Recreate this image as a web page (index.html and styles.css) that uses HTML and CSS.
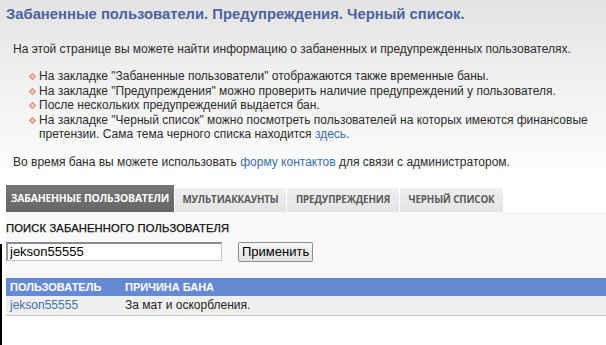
FILE: index.html
```html
<!DOCTYPE html>
<html lang="ru">
<head>
<meta charset="utf-8">
<link rel="stylesheet" href="styles.css">
</head>
<body>
<div class="page">
  <h1 class="title">Забаненные пользователи. Предупреждения. Черный список.</h1>
  <p class="intro">На этой странице вы можете найти информацию о забаненных и предупрежденных пользователях.</p>
  <ul class="notes">
    <li>На закладке "Забаненные пользователи" отображаются также временные баны.</li>
    <li>На закладке "Предупреждения" можно проверить наличие предупреждений у пользователя.</li>
    <li>После нескольких предупреждений выдается бан.</li>
    <li>На закладке "Черный список" можно посмотреть пользователей на которых имеются финансовые претензии. Сама тема черного списка находится <a href="#">здесь</a>.</li>
  </ul>
  <p class="contact">Во время бана вы можете использовать <a href="#">форму контактов</a> для связи с администратором.</p>

  <div class="tabs">
    <div class="tab active">ЗАБАНЕННЫЕ ПОЛЬЗОВАТЕЛИ</div>
    <div class="tab t2">МУЛЬТИАККАУНТЫ</div>
    <div class="tab t3">ПРЕДУПРЕЖДЕНИЯ</div>
    <div class="tab t4">ЧЕРНЫЙ СПИСОК</div>
  </div>
  <div class="panel">
    <div class="search-label">ПОИСК ЗАБАНЕННОГО ПОЛЬЗОВАТЕЛЯ</div>
    <div class="search-row">
      <input class="search-input" type="text" value="jekson55555">
      <button class="apply">Применить</button>
    </div>
  </div>
  <table class="bans">
    <thead>
      <tr><th class="c-user">ПОЛЬЗОВАТЕЛЬ</th><th>ПРИЧИНА БАНА</th></tr>
    </thead>
    <tbody>
      <tr><td class="c-user"><a href="#">jekson55555</a></td><td>За мат и оскорбления.</td></tr>
    </tbody>
  </table>
</div>
<div class="edge"></div>
</body>
</html>
```
FILE: styles.css
```css
html, body {
  margin: 0;
  padding: 0;
}
body {
  width: 606px;
  height: 345px;
  overflow: hidden;
  position: relative;
  background: linear-gradient(#e3e3e3 0px, #efefef 70px, #ffffff 185px, #ffffff 100%);
  font-family: "Liberation Sans", Arial, sans-serif;
  font-size: 12px;
  color: #2b2b2b;
}
a {
  color: #3d6fa8;
  text-decoration: none;
}
.page {
  padding-left: 6px;
}
.title {
  margin: 0;
  padding-top: 5px;
  font-size: 14.8px;
  line-height: 19px;
  font-weight: bold;
  color: #4a63a0;
}
.intro {
  margin: 18px 0 0 7px;
  line-height: 14px;
}
.notes {
  list-style: none;
  margin: 13px 0 0 0;
  padding: 0 0 0 33px;
  line-height: 14.5px;
  width: 560px;
}
.notes li {
  position: relative;
}
.notes li::before {
  content: "";
  position: absolute;
  left: -9px;
  top: 5px;
  width: 3px;
  height: 3px;
  border: 1.5px solid #e2775a;
  background: #fbe2d8;
  transform: rotate(45deg);
}
.contact {
  margin: 13px 0 0 7px;
  line-height: 14px;
}
.tabs {
  display: flex;
  margin-top: 16px;
  height: 27px;
}
.tab {
  display: flex;
  align-items: center;
  justify-content: center;
  font-family: "Open Sans", "DejaVu Sans", sans-serif;
  font-weight: bold;
  font-size: 9.8px;
  color: #5a5a5a;
  background: linear-gradient(#f0f0f0, #e4e4e4);
  margin-top: 3px;
  margin-right: 1px;
  letter-spacing: -0.15px;
}
.tab.active {
  margin-top: 0;
  width: 168px;
  font-size: 10.4px;
  color: #fff;
  background: linear-gradient(#747474, #676767);
  letter-spacing: -0.2px;
}
.t2 { width: 111px; }
.t3 { width: 112px; }
.t4 { width: 103px; }
.panel {
  background: #f8f8f8;
  height: 65px;
  padding-top: 10px;
  box-sizing: border-box;
}
.search-label {
  font-size: 11.2px;
  line-height: 13px;
  color: #0d0d0d;
  letter-spacing: 0.15px;
  -webkit-text-stroke: 0.25px #0d0d0d;
}
.search-row {
  display: flex;
  align-items: center;
  margin-top: 6px;
}
.search-input {
  box-sizing: border-box;
  width: 216px;
  height: 19px;
  margin: 0;
  padding: 0 2px;
  font-family: "Liberation Sans", Arial, sans-serif;
  font-size: 13px;
  color: #000;
  background: #fff;
  border: 1px solid #c8c8c8;
  border-top: 2px solid #8a8a8a;
  border-left: 2px solid #9a9a9a;
}
.apply {
  box-sizing: border-box;
  height: 20px;
  margin: 1px 0 0 16px;
  padding: 0 3px;
  font-family: "Liberation Sans", Arial, sans-serif;
  font-size: 13px;
  color: #000;
  background: linear-gradient(#f6f6f6, #e3e3e3);
  border: 1px solid #8e8e8e;
  border-radius: 2px;
}
.bans {
  width: 600px;
  border-collapse: collapse;
  margin-top: 1px;
}
.bans th {
  background: #6689d4;
  color: #fff;
  font-size: 11px;
  font-weight: bold;
  text-align: left;
  height: 18px;
  padding: 0 4px;
}
.bans td {
  background: #f0f0ef;
  height: 19px;
  padding: 0 4px;
  border-bottom: 1px solid #c9c9c9;
  color: #222;
}
.bans .c-user {
  width: 107px;
}
.edge {
  position: absolute;
  left: 0;
  top: 244px;
  width: 2px;
  height: 101px;
  background: #000;
}
```
